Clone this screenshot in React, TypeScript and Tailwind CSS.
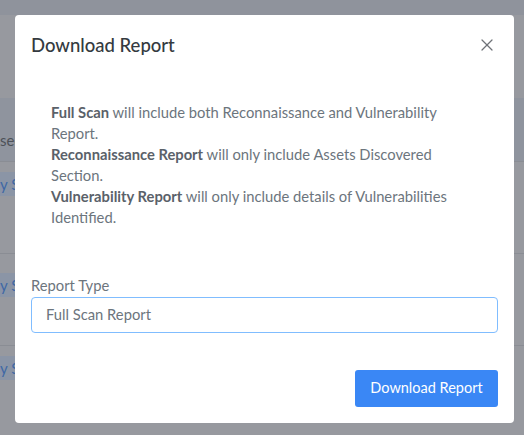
import { X } from 'lucide-react';

const font = { fontFamily: '"Lato", "Noto Sans", sans-serif' };

function BackgroundRow({ label, chipTop }: { label: string; chipTop: string }) {
  return (
    <div className="h-[92px] border-b border-[#8a8d94]">
      <div className={chipTop}>
        <span className="inline-block w-[16px] overflow-hidden whitespace-nowrap bg-[#8b95a6] text-right text-[15px] leading-[24px] text-[#3f68a5]">
          {label}
        </span>
      </div>
    </div>
  );
}

export default function App() {
  return (
    <div className="relative h-[435px] w-[524px] overflow-hidden bg-[#97999f]" style={font}>
      {/* page behind the overlay */}
      <div className="h-[15px] bg-[#8f939c]" />
      <div className="h-[83px]" />
      <div className="flex h-[64px] items-end border-b border-[#8a8d94] bg-[#8f949e] pb-[10px]">
        <span className="inline-block w-[15px] overflow-hidden whitespace-nowrap text-right text-[15px] text-[#4d5158]">sed</span>
      </div>
      <BackgroundRow label="y S" chipTop="pt-[10px]" />
      <BackgroundRow label="y S" chipTop="pt-[19px]" />
      <BackgroundRow label="y S" chipTop="pt-[10px]" />

      {/* modal */}
      <div className="absolute left-[15px] top-[15px] flex h-[408px] w-[499px] flex-col rounded-[4px] bg-white">
        <div className="flex items-center justify-between px-4 py-4">
          <h2 className="text-[18.5px] font-medium leading-7 text-[#343a40]">Download Report</h2>
          <button type="button" className="mr-[1px] text-[#6f7378]">
            <X size={20} strokeWidth={1.5} />
          </button>
        </div>

        <div className="mt-[27px] w-[456px] pl-9 text-[14.75px] leading-[21px] text-[#6c757d]">
          <p>
            <b className="font-bold text-[#5a6169]">Full Scan</b> will include both Reconnaissance and Vulnerability Report.
          </p>
          <p>
            <b className="font-bold text-[#5a6169]">Reconnaissance Report</b> will only include Assets Discovered Section.
          </p>
          <p>
            <b className="font-bold text-[#5a6169]">Vulnerability Report</b> will only include details of Vulnerabilities Identified.
          </p>
        </div>

        <div className="mt-[47px] px-4">
          <label className="block text-[14.75px] leading-[21px] text-[#6c757d]">Report Type</label>
          <div className="mt-[0.5px] flex h-[36px] items-center rounded-[4px] border border-[#80bdff] px-[14px] text-[14.75px] text-[#6c757d]">
            Full Scan Report
          </div>
        </div>

        <div className="mt-[37px] flex justify-end px-4">
          <button
            type="button"
            className="h-[37px] w-[143px] rounded-[3px] bg-[#3a87f5] text-[14.5px] text-white"
          >
            Download Report
          </button>
        </div>
      </div>
    </div>
  );
}
